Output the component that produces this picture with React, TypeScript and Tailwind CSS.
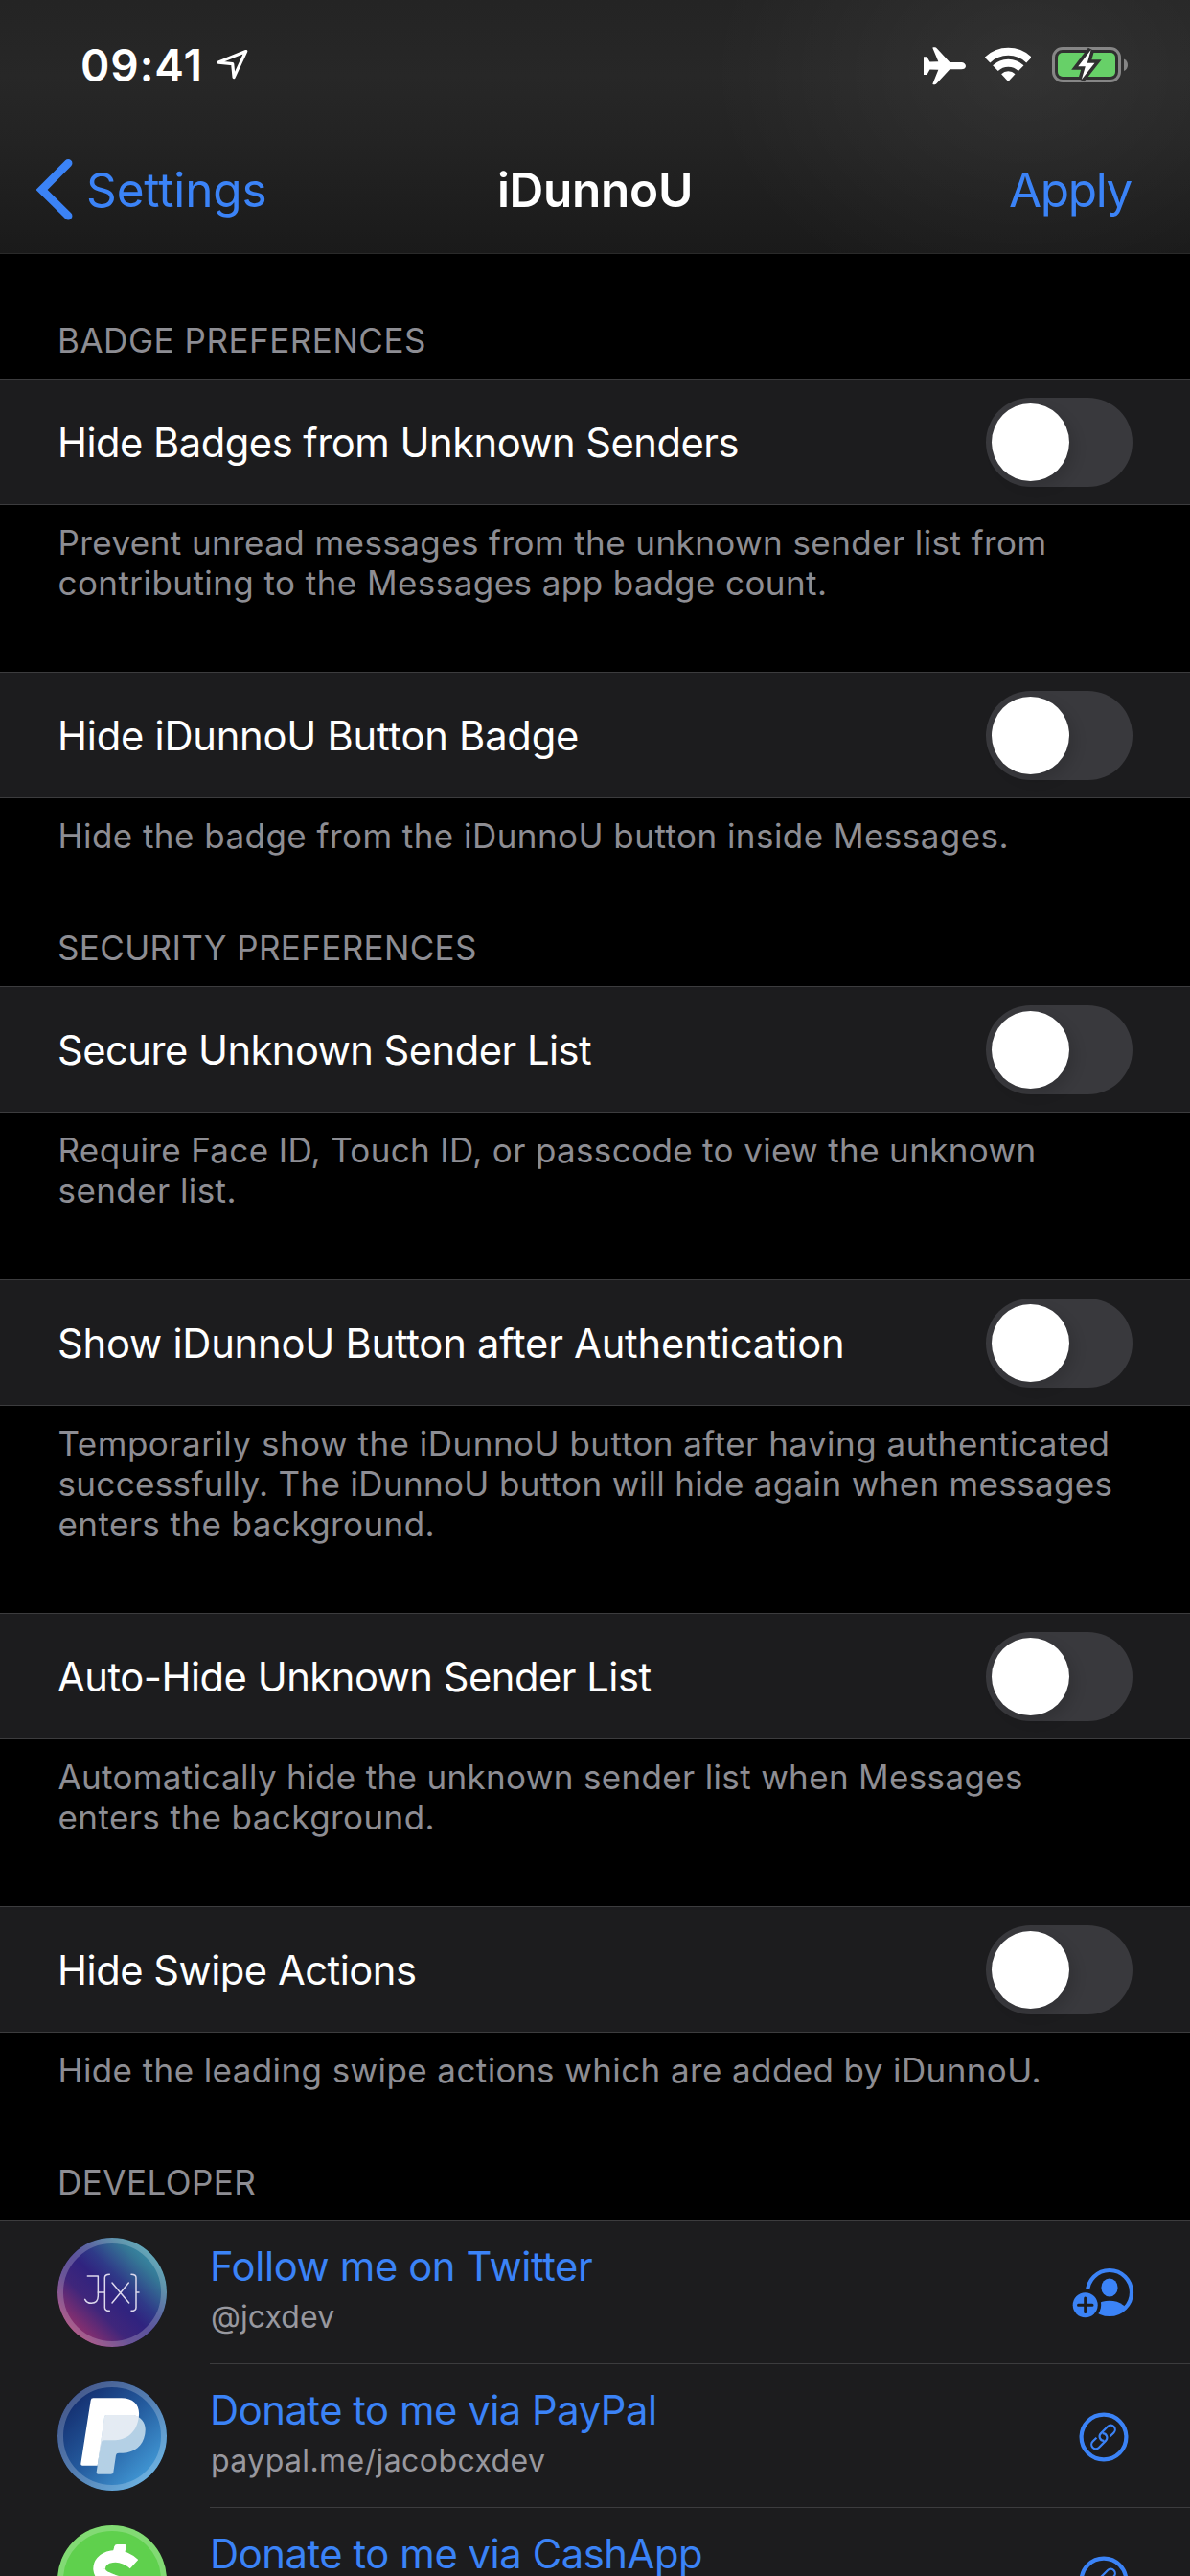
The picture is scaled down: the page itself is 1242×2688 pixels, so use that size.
import type { ReactNode } from "react";

type Line = { text: string; track: string };
type Setting = { header?: Line; title: Line; footer: Line[] };

const SETTINGS: Setting[] = [
  {
    header: { text: "BADGE PREFERENCES", track: "tracking-[0.534px]" },
    title: { text: "Hide Badges from Unknown Senders", track: "tracking-[-0.506px]" },
    footer: [
      { text: "Prevent unread messages from the unknown sender list from", track: "tracking-[0.42px]" },
      { text: "contributing to the Messages app badge count.", track: "tracking-[0.438px]" },
    ],
  },
  {
    title: { text: "Hide iDunnoU Button Badge", track: "tracking-[-0.224px]" },
    footer: [{ text: "Hide the badge from the iDunnoU button inside Messages.", track: "tracking-[0.457px]" }],
  },
  {
    header: { text: "SECURITY PREFERENCES", track: "tracking-[0.366px]" },
    title: { text: "Secure Unknown Sender List", track: "tracking-[-0.521px]" },
    footer: [
      { text: "Require Face ID, Touch ID, or passcode to view the unknown", track: "tracking-[0.355px]" },
      { text: "sender list.", track: "tracking-[0.428px]" },
    ],
  },
  {
    title: { text: "Show iDunnoU Button after Authentication", track: "tracking-[-0.219px]" },
    footer: [
      { text: "Temporarily show the iDunnoU button after having authenticated", track: "tracking-[0.494px]" },
      { text: "successfully. The iDunnoU button will hide again when messages", track: "tracking-[0.341px]" },
      { text: "enters the background.", track: "tracking-[0.42px]" },
    ],
  },
  {
    title: { text: "Auto-Hide Unknown Sender List", track: "tracking-[-0.479px]" },
    footer: [
      { text: "Automatically hide the unknown sender list when Messages", track: "tracking-[0.341px]" },
      { text: "enters the background.", track: "tracking-[0.42px]" },
    ],
  },
  {
    title: { text: "Hide Swipe Actions", track: "tracking-[-0.475px]" },
    footer: [{ text: "Hide the leading swipe actions which are added by iDunnoU.", track: "tracking-[0.402px]" }],
  },
];

function LocationArrow() {
  return (
    <svg width="36" height="36" viewBox="0 0 36 36" fill="none" className="mt-12 ml-3">
      <path d="M32.2 5L3.6 16.6L18.2 18.2L19.6 32.2Z" transform="translate(0.5 0.5)" stroke="white" strokeWidth="3.2" strokeLinejoin="round" />
    </svg>
  );
}

function Airplane() {
  return (
    <svg width="44" height="40" viewBox="0 0 132 120" className="mt-[48.5px]">
      <path
        fill="white"
        d="M0 31H8Q10.500 31 11.500 33L19.500 46.500L46 45.500L28.500 3.500Q27.500 1 30 1H35.500Q39 1 41 4L82 48H118C126 48 132 54 132 60C132 66 126 70 118 70H82L41 114Q39 117.500 35.500 117.500H30Q27.500 117.500 28.500 115L46 71.500L19.500 70.500L11.500 85Q10.500 87 8 87H0Z"
      />
    </svg>
  );
}

function Wifi() {
  return (
    <svg width="48" height="38" viewBox="0 0 48 38" fill="none" className="mt-12 ml-5">
      <g stroke="white" strokeWidth="8">
        <path d="M2.6 14.600A31.300 31.300 0 0 1 46 14.600" />
        <path d="M10.900 23.100A19.200 19.200 0 0 1 37.700 23.100" />
      </g>
      <path d="M17.100 29.300A10.300 10.300 0 0 1 31.500 29.300L25.300 36.100Q24.300 37.100 23.300 36.100Z" fill="white" />
    </svg>
  );
}

function Battery() {
  const bolt = "M40.600 3L27.300 20.300H34.800L30.800 34L44.500 16.700H36.800Z";
  return (
    <svg width="80" height="38" viewBox="0 0 80 38" className="mt-[49px] ml-[22px]">
      <defs>
        <mask id="boltGap">
          <rect width="80" height="38" fill="white" />
          <path d={bolt} fill="black" stroke="black" strokeWidth="7" />
        </mask>
      </defs>
      <g mask="url(#boltGap)">
        <rect x="1.500" y="1.500" width="69" height="34" rx="9.500" fill="none" stroke="#868686" strokeWidth="3" />
        <rect x="6" y="6" width="60" height="25" rx="5" fill="#67d068" />
      </g>
      <path d="M75 12.500C77.700 13.600 79 16 79 18.700C79 21.400 77.700 23.800 75 24.900Z" fill="#868686" />
      <path d={bolt} fill="white" />
    </svg>
  );
}

function TopBar() {
  return (
    <header className="h-[265px] shrink-0 border-b border-[#2a2a2a] bg-[radial-gradient(ellipse_330px_250px_at_1070px_75px,rgba(255,255,255,0.055),rgba(255,255,255,0)),linear-gradient(to_bottom,#242424_0px,#272727_80px,#232323_150px,#1a1a1a_264px)]">
      <div className="flex h-[132px] items-start pr-16 pl-[84px]">
        <span className="mt-[38px] text-[46px] leading-[60px] font-semibold tracking-[0.97px]">09:41</span>
        <LocationArrow />
        <div className="ml-auto flex items-start">
          <Airplane />
          <Wifi />
          <Battery />
        </div>
      </div>
      <nav className="grid h-[132px] grid-cols-[1fr_auto_1fr] items-center pr-[61px] pl-[38px] text-[49.5px] leading-[60px]">
        <div className="flex items-center text-[#3b83f7]">
          <svg width="40" height="66" viewBox="0 0 40 66" fill="none" className="mr-3">
            <path d="M33.200 5.200L5.600 33L33.200 60.200" stroke="currentColor" strokeWidth="8.500" strokeLinecap="round" strokeLinejoin="miter" />
          </svg>
          <span className="tracking-[-0.127px]">Settings</span>
        </div>
        <h1 className="ml-[23px] font-semibold tracking-[-0.287px]">iDunnoU</h1>
        <span className="justify-self-end tracking-[-1.375px] text-[#3b83f7]">Apply</span>
      </nav>
    </header>
  );
}

function Switch() {
  return (
    <div role="switch" aria-checked={false} className="h-[93px] w-[153px] rounded-full bg-[#39393d] p-[6px]">
      <div className="size-[81px] rounded-full bg-white shadow-[6px_6px_14px_rgba(0,0,0,0.12)]" />
    </div>
  );
}

function SectionHeader({ line }: { line: Line }) {
  return (
    <h2 className="flex h-16 shrink-0 items-end pb-[19px] pl-[60px] text-[35px] leading-[42px] text-[#8d8d93]">
      <span className={line.track}>{line.text}</span>
    </h2>
  );
}

function SettingGroup({ setting }: { setting: Setting }) {
  return (
    <section className="flex shrink-0 flex-col">
      {setting.header && <SectionHeader line={setting.header} />}
      <div className="flex h-[132px] items-center justify-between border-y border-[#3c3c3e] bg-[#1c1c1e] px-[60px]">
        <span className={`pt-[2px] text-[41.7px] leading-[50px] whitespace-nowrap ${setting.title.track}`}>{setting.title.text}</span>
        <Switch />
      </div>
      <div className="pt-[18px] pb-[72px] pl-[60.5px] text-[35px] leading-[42px] text-[#8d8d93]">
        {setting.footer.map((l) => (
          <p key={l.text} className={`whitespace-nowrap ${l.track}`}>{l.text}</p>
        ))}
      </div>
    </section>
  );
}

function Avatar({ children }: { children: ReactNode }) {
  return (
    <svg width="114" height="114" viewBox="0 0 342 342" className="mt-[18px] shrink-0 overflow-hidden rounded-full">
      {children}
      <circle cx="171" cy="171" r="162" fill="none" stroke="white" strokeOpacity="0.220" strokeWidth="18" />
    </svg>
  );
}

function JcxAvatar() {
  return (
    <Avatar>
      <defs>
        <linearGradient id="jcx" x1="0.120" y1="0.900" x2="0.880" y2="0.140">
          <stop offset="0" stopColor="#a5336a" />
          <stop offset="0.320" stopColor="#3f267b" />
          <stop offset="0.500" stopColor="#30237f" />
          <stop offset="0.640" stopColor="#2f3a88" />
          <stop offset="0.860" stopColor="#357796" />
          <stop offset="1" stopColor="#3a92a8" />
        </linearGradient>
      </defs>
      <rect width="342" height="342" fill="url(#jcx)" />
      <g fill="none" stroke="#dcd8ec" strokeWidth="4.500" strokeLinecap="round" strokeLinejoin="round">
        <path d="M94 120H127V182Q127 204 106 205Q92 205 86 193" />
        <path d="M127 171H148M163 115Q148 115 148 125V218Q148 229 163 229" />
        <path d="M171 141L224 204M223 141L171 204" />
        <path d="M231 115Q246 115 246 125V218Q246 229 231 229M246 171H255" />
      </g>
    </Avatar>
  );
}

function PaypalAvatar() {
  const front = "M112 52H200C238 52 258 75 255 106C251 155 222 184 172 184H146Q138 184 137 191L125 263H78Q72 263 73 257L104 59Q105 52 112 52Z";
  const back = "M154 105H240C262 112 277 130 275 154C273 198 244 222 205 224H192Q184 224 183 231L175 284Q174 290 167 290H127Q121 290 122 284L147 111Q148 105 154 105Z";
  return (
    <Avatar>
      <defs>
        <linearGradient id="pp" x1="0.100" y1="0.120" x2="0.880" y2="0.900">
          <stop offset="0" stopColor="#12296a" />
          <stop offset="0.500" stopColor="#245b9e" />
          <stop offset="1" stopColor="#45a0dc" />
        </linearGradient>
        <clipPath id="ppFront">
          <path d={front} />
        </clipPath>
      </defs>
      <rect width="342" height="342" fill="url(#pp)" />
      <path d={front} fill="white" />
      <path d={back} fill="#b4d0e5" />
      <path d={back} fill="#e4ebf3" clipPath="url(#ppFront)" />
    </Avatar>
  );
}

function CashAvatar() {
  return (
    <Avatar>
      <rect width="342" height="342" fill="#5fd04d" />
      <path d="M186 60H211Q217 60 216 66L209 92H171L178 67Q180 60 186 60Z" fill="white" />
      <path d="M240 122C220 104 195 94 170 98C140 103 130 122 131 138C133 160 155 166 175 173C200 181 215 190 213 212C210 240 185 248 160 245C135 242 118 232 105 220" fill="none" stroke="white" strokeWidth="38" />
      <path d="M133 252H171L164 280H126Z" fill="white" />
    </Avatar>
  );
}

function FollowIcon() {
  return (
    <svg width="64" height="54" viewBox="0 0 64 54" className="mt-[49px] overflow-visible">
      <defs>
        <mask id="plusGap">
          <rect width="64" height="54" fill="white" />
          <circle cx="12.700" cy="39" r="16.500" fill="black" />
        </mask>
        <clipPath id="faceClip">
          <circle cx="38" cy="26" r="24" />
        </clipPath>
      </defs>
      <g mask="url(#plusGap)" fill="#3b83f7">
        <circle cx="38" cy="26" r="23" fill="none" stroke="#3b83f7" strokeWidth="4.200" />
        <ellipse cx="38" cy="21" rx="8.600" ry="9.400" />
        <ellipse cx="38" cy="50" rx="20" ry="15.300" clipPath="url(#faceClip)" />
      </g>
      <circle cx="12.700" cy="39.200" r="13" fill="#3b83f7" />
      <path d="M5.500 39.200H20M12.700 32V46.400" stroke="#1c1c1e" strokeWidth="3" strokeLinecap="round" />
    </svg>
  );
}

function LinkIcon() {
  return (
    <svg width="52" height="52" viewBox="0 0 52 52" fill="none" stroke="#3b83f7" className="mt-[49.5px] mr-[6px]">
      <circle cx="26" cy="26" r="23.400" strokeWidth="4.200" />
      <g transform="translate(25.500 26) rotate(-45)" strokeWidth="2.200">
        <path d="M5.500 4.500H11A4.500 4.500 0 0 0 11 -4.500H1A4.500 4.500 0 0 0 -2 3.400" />
        <path d="M-5.500 -4.500H-11A4.500 4.500 0 0 0 -11 4.500H-1A4.500 4.500 0 0 0 2 -3.400" />
      </g>
    </svg>
  );
}

type Contact = { avatar: ReactNode; icon: ReactNode; title: Line; sub?: Line };

const CONTACTS: Contact[] = [
  {
    avatar: <JcxAvatar />,
    icon: <FollowIcon />,
    title: { text: "Follow me on Twitter", track: "tracking-[-0.358px]" },
    sub: { text: "@jcxdev", track: "tracking-[0.1px]" },
  },
  {
    avatar: <PaypalAvatar />,
    icon: <LinkIcon />,
    title: { text: "Donate to me via PayPal", track: "tracking-[-0.437px]" },
    sub: { text: "paypal.me/jacobcxdev", track: "tracking-[0.412px]" },
  },
  {
    avatar: <CashAvatar />,
    icon: <LinkIcon />,
    title: { text: "Donate to me via CashApp", track: "tracking-[-0.406px]" },
  },
];

function ContactRow({ contact }: { contact: Contact }) {
  return (
    <div className="flex h-[150px] shrink-0 items-start pl-[60px]">
      {contact.avatar}
      <div className="ml-[45px] flex h-[150px] flex-1 items-start justify-between border-b border-[#3c3c3e] pr-[58px]">
        <div className="pt-[23px]">
          <div className={`text-[41.7px] leading-[50px] whitespace-nowrap text-[#3b83f7] ${contact.title.track}`}>{contact.title.text}</div>
          {contact.sub && (
            <div className={`mt-2 pl-px text-[32px] leading-[40px] whitespace-nowrap text-[#98989f] ${contact.sub.track}`}>{contact.sub.text}</div>
          )}
        </div>
        {contact.icon}
      </div>
    </div>
  );
}

export default function App() {
  return (
    <div className="flex h-[2688px] w-[1242px] flex-col overflow-hidden bg-black font-['Inter',sans-serif] text-white">
      <TopBar />
      <main className="flex flex-col pt-[66px]">
        {SETTINGS.map((s) => (
          <SettingGroup key={s.title.text} setting={s} />
        ))}
        <SectionHeader line={{ text: "DEVELOPER", track: "tracking-[0.483px]" }} />
        <div className="h-[371px] shrink-0 overflow-hidden bg-[#1c1c1e] shadow-[inset_0_1px_0_#3c3c3e]">
          {CONTACTS.map((c) => (
            <ContactRow key={c.title.text} contact={c} />
          ))}
        </div>
      </main>
    </div>
  );
}
